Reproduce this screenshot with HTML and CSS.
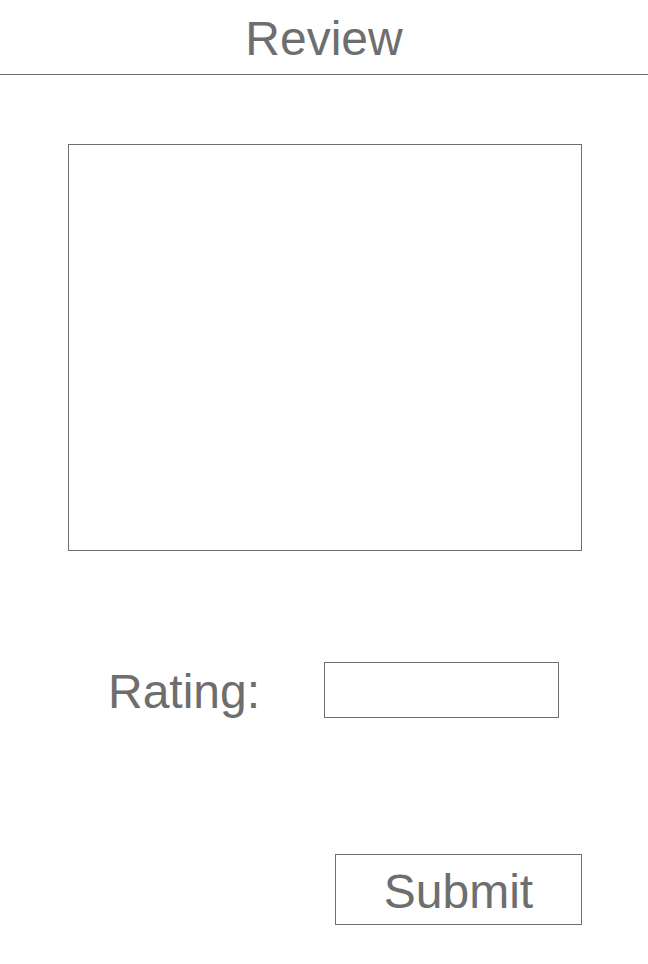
FILE: index.html
```html
<!DOCTYPE html>
<html>
<head>
<meta charset="utf-8">
<link rel="stylesheet" href="styles.css">
</head>
<body>
<header class="header">
  <h1 class="title">Review</h1>
</header>
<main class="content">
  <div class="review-box"></div>
  <div class="rating-row">
    <span class="rating-label">Rating:</span>
    <div class="rating-input"></div>
  </div>
  <div class="submit-row">
    <div class="submit-btn">Submit</div>
  </div>
</main>
</body>
</html>
```
FILE: styles.css
```css
html, body {
  margin: 0;
  padding: 0;
  background: #ffffff;
}
body {
  width: 648px;
  font-family: "Liberation Sans", Arial, sans-serif;
  color: #6e6e6e;
}
.header {
  padding: 15px 0 11px;
  border-bottom: 1px solid #6e6e6e;
  text-align: center;
}
.title {
  margin: 0;
  font-size: 48px;
  font-weight: normal;
  line-height: 48px;
}
.content {
  display: flex;
  flex-direction: column;
}
.review-box {
  box-sizing: border-box;
  margin: 69px 0 0 68px;
  width: 514px;
  height: 407px;
  border: 1px solid #6e6e6e;
}
.rating-row {
  display: flex;
  align-items: center;
  margin-top: 111px;
  height: 56px;
}
.rating-label {
  margin-left: 108px;
  width: 216px;
  padding-top: 4px;
  font-size: 48px;
  line-height: 48px;
}
.rating-input {
  box-sizing: border-box;
  width: 235px;
  height: 56px;
  border: 1px solid #6e6e6e;
}
.submit-row {
  display: flex;
  margin-top: 136px;
}
.submit-btn {
  box-sizing: border-box;
  margin-left: 335px;
  width: 247px;
  height: 71px;
  padding-top: 5px;
  border: 1px solid #6e6e6e;
  display: flex;
  align-items: center;
  justify-content: center;
  font-size: 48px;
  line-height: 48px;
}
```
